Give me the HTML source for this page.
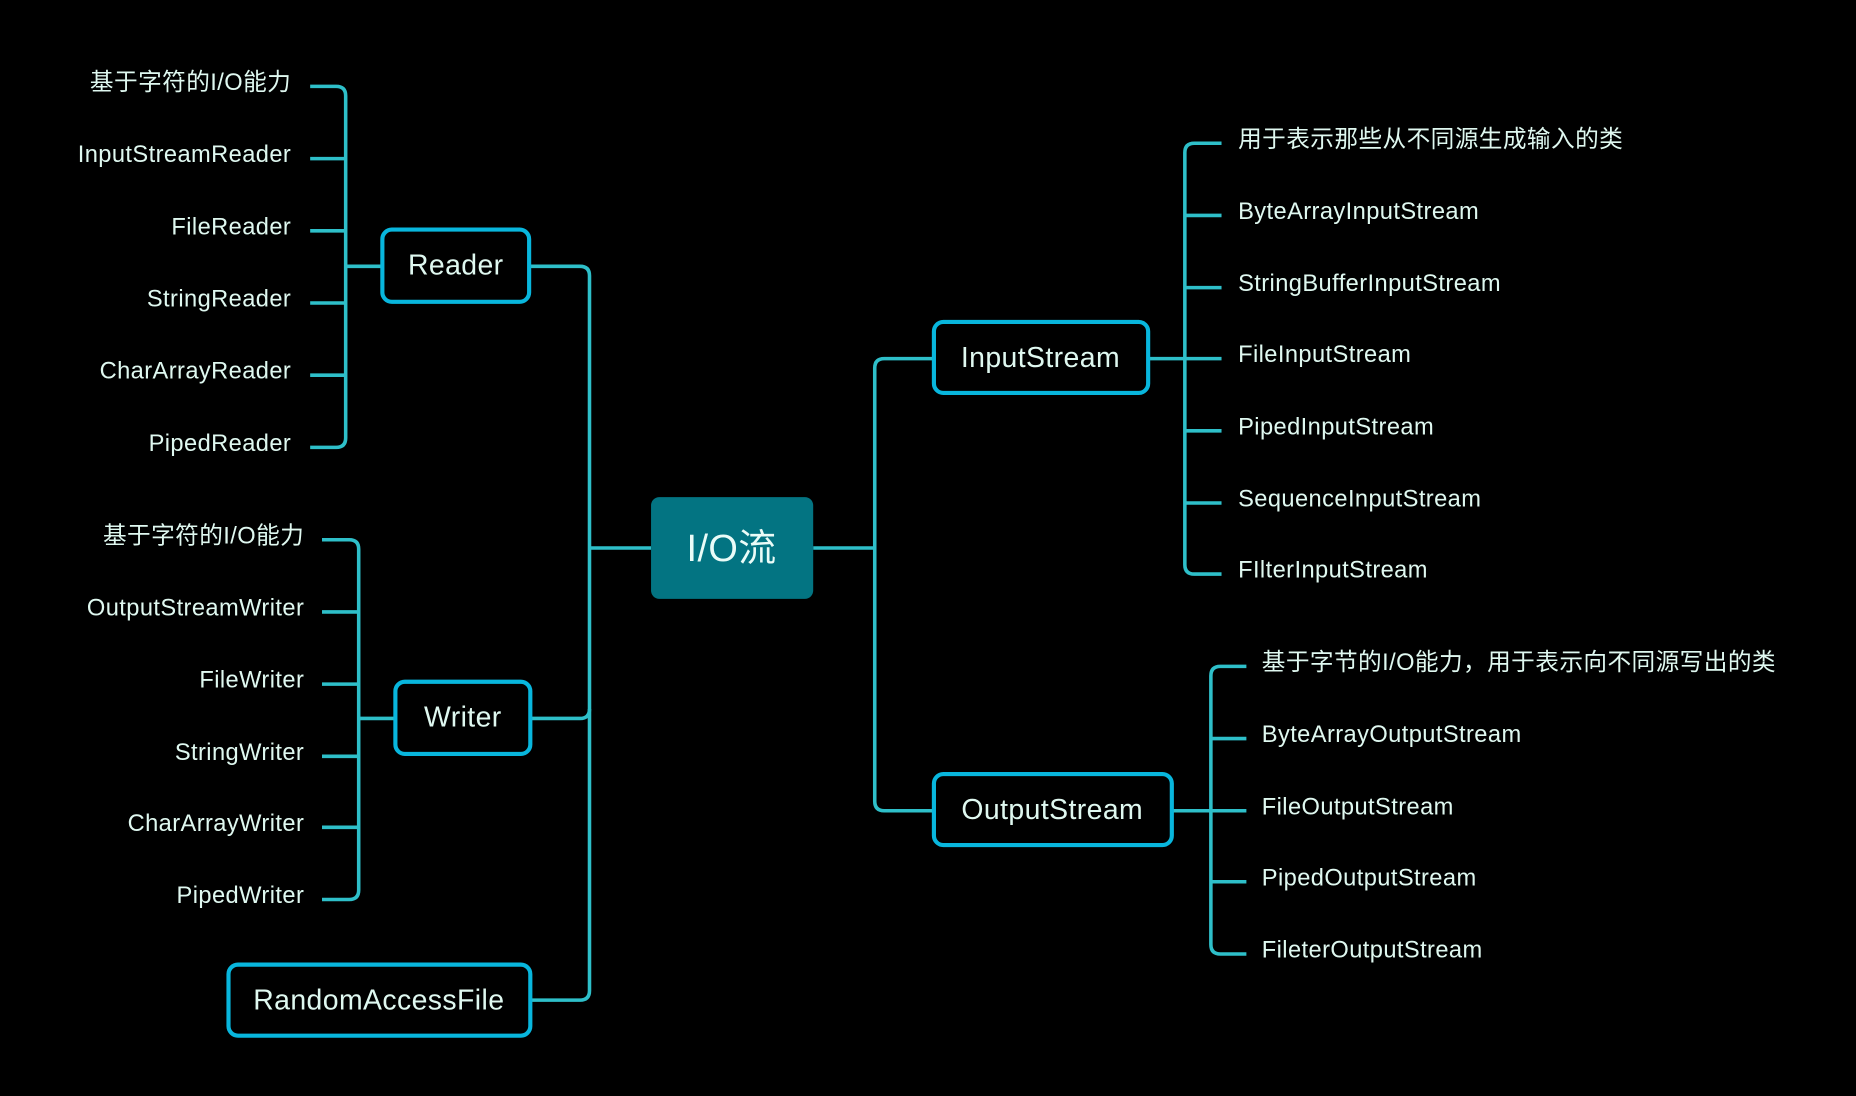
<!DOCTYPE html>
<html><head><meta charset="utf-8"><style>
html,body{margin:0;padding:0;background:#000;width:1856px;height:1096px;overflow:hidden}
svg{display:block}
text{font-family:"Liberation Sans","Noto Sans CJK SC",sans-serif;fill:#dff8f0;font-size:20px;letter-spacing:0.35px}
.l{fill:none;stroke:#2ebfc9;stroke-width:3}
.b{fill:#000;stroke:#08b6dd;stroke-width:3.5}
.bt{font-size:24px;text-anchor:middle}
</style></head><body>
<svg width="1856" height="1096" viewBox="0 0 1568 926">
<rect width="1568" height="926" fill="#000"/>
<path class="l" d="M262,73 H284 Q292,73 292,81 V370 Q292,378 284,378 H262"/>
<path class="l" d="M262,134 H292 M262,195 H292 M262,256 H292 M262,317 H292 M292,225 H323"/>
<path class="l" d="M272,456 H295 Q303,456 303,464 V752 Q303,760 295,760 H272"/>
<path class="l" d="M272,517 H303 M272,578 H303 M272,639 H303 M272,699 H303 M303,607 H334"/>
<path class="l" d="M447,225 H490 Q498,225 498,233 V837 Q498,845 490,845 H448"/>
<path class="l" d="M448,607 H490 Q498,607 498,599 M498,463 H550"/>
<path class="l" d="M687,463 H739"/>
<path class="l" d="M789,303 H747 Q739,303 739,311 V677 Q739,685 747,685 H789"/>
<path class="l" d="M1032,121 H1009 Q1001,121 1001,129 V477 Q1001,485 1009,485 H1032"/>
<path class="l" d="M970,303 H1032 M1001,182 H1032 M1001,243 H1032 M1001,364 H1032 M1001,425 H1032"/>
<path class="l" d="M1053,563 H1031 Q1023,563 1023,571 V798 Q1023,806 1031,806 H1053"/>
<path class="l" d="M990,685 H1053 M1023,624 H1053 M1023,745 H1053"/>
<rect x="550" y="420" width="137" height="86" rx="7" fill="#037482"/>
<text x="618" y="474" style="font-size:32px;text-anchor:middle;fill:#eafcf8">I/O流</text>
<rect class="b" x="323" y="194" width="124" height="61" rx="8"/>
<text class="bt" x="385" y="232">Reader</text>
<rect class="b" x="334" y="576" width="114" height="61" rx="8"/>
<text class="bt" x="391" y="614">Writer</text>
<rect class="b" x="193" y="815" width="255" height="60" rx="8"/>
<text class="bt" x="320" y="853">RandomAccessFile</text>
<rect class="b" x="789" y="272" width="181" height="60" rx="8"/>
<text class="bt" x="879" y="310">InputStream</text>
<rect class="b" x="789" y="654" width="201" height="60" rx="8"/>
<text class="bt" x="889" y="692">OutputStream</text>
<g style="text-anchor:end">
<text x="246" y="76">基于字符的I/O能力</text>
<text x="246" y="137">InputStreamReader</text>
<text x="246" y="198">FileReader</text>
<text x="246" y="259">StringReader</text>
<text x="246" y="320">CharArrayReader</text>
<text x="246" y="381">PipedReader</text>
<text x="257" y="459">基于字符的I/O能力</text>
<text x="257" y="520">OutputStreamWriter</text>
<text x="257" y="581">FileWriter</text>
<text x="257" y="642">StringWriter</text>
<text x="257" y="702">CharArrayWriter</text>
<text x="257" y="763">PipedWriter</text>
</g>
<text x="1046" y="124">用于表示那些从不同源生成输入的类</text>
<text x="1046" y="185">ByteArrayInputStream</text>
<text x="1046" y="246">StringBufferInputStream</text>
<text x="1046" y="306">FileInputStream</text>
<text x="1046" y="367">PipedInputStream</text>
<text x="1046" y="428">SequenceInputStream</text>
<text x="1046" y="488">FIlterInputStream</text>
<text x="1066" y="566">基于字节的I/O能力，用于表示向不同源写出的类</text>
<text x="1066" y="627">ByteArrayOutputStream</text>
<text x="1066" y="688">FileOutputStream</text>
<text x="1066" y="748">PipedOutputStream</text>
<text x="1066" y="809">FileterOutputStream</text>
</svg>
</body></html>
